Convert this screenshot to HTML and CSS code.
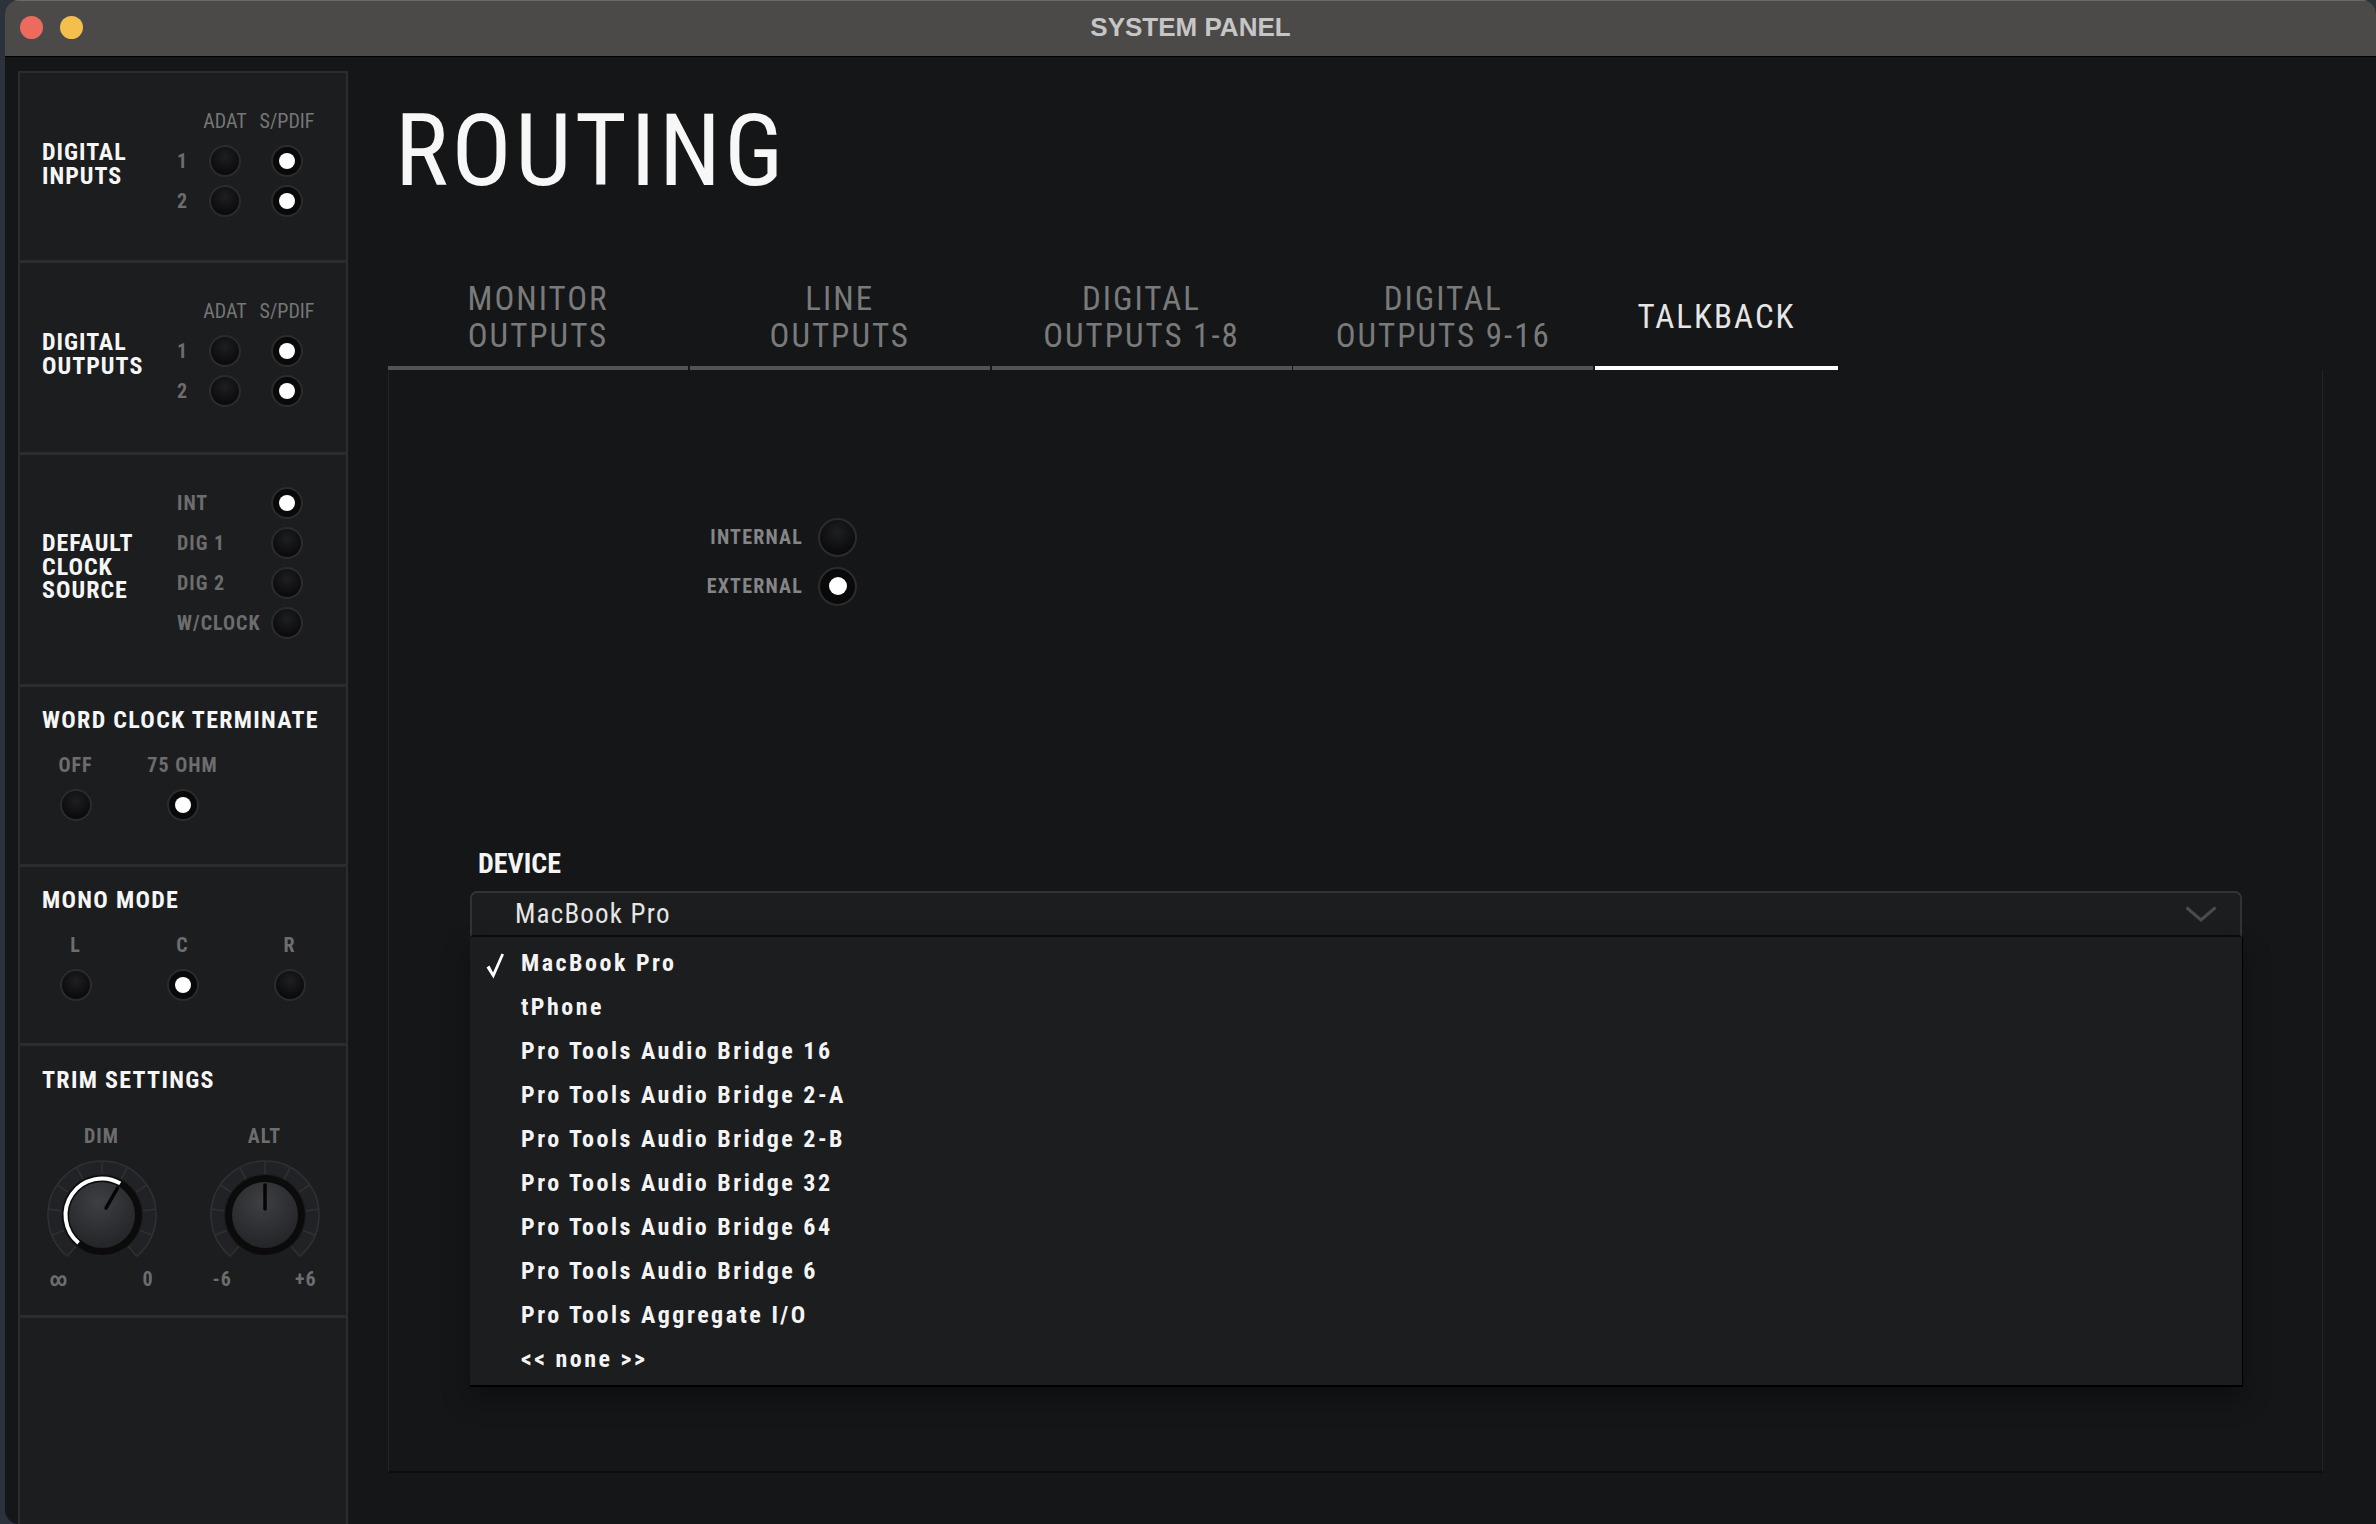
FILE: index.html
```html
<!DOCTYPE html>
<html lang="en">

<head>
    <meta charset="UTF-8">
    <meta name="viewport" content="width=device-width, initial-scale=1.0">
    <title>System Panel</title>
    <link rel="stylesheet" href="styles.css">
</head>

<body>
    <div class="window">

        <!-- title bar -->
        <div class="titlebar">
            <div class="lights">
                <span class="light light-red"></span>
                <span class="light light-yellow"></span>
            </div>
            <div class="window-title">SYSTEM PANEL</div>
            <div></div>
        </div>

        <div class="window-body">

            <!-- left settings column -->
            <aside class="sidebar">
                <section class="panel panel-digital panel-first">
                    <div class="panel-label">DIGITAL<br>INPUTS</div>
                    <div class="port-grid">
                        <span></span><span class="col-head">ADAT</span><span class="col-head">S/PDIF</span>
                        <span class="row-num">1</span><span class="radio"></span><span class="radio on"></span>
                        <span class="row-num">2</span><span class="radio"></span><span class="radio on"></span>
                    </div>
                </section>

                <section class="panel panel-digital">
                    <div class="panel-label">DIGITAL<br>OUTPUTS</div>
                    <div class="port-grid">
                        <span></span><span class="col-head">ADAT</span><span class="col-head">S/PDIF</span>
                        <span class="row-num">1</span><span class="radio"></span><span class="radio on"></span>
                        <span class="row-num">2</span><span class="radio"></span><span class="radio on"></span>
                    </div>
                </section>

                <section class="panel panel-clock">
                    <div class="panel-label">DEFAULT<br>CLOCK<br>SOURCE</div>
                    <div class="clock-grid">
                        <span class="opt-label">INT</span><span class="radio on"></span>
                        <span class="opt-label">DIG 1</span><span class="radio"></span>
                        <span class="opt-label">DIG 2</span><span class="radio"></span>
                        <span class="opt-label">W/CLOCK</span><span class="radio"></span>
                    </div>
                </section>

                <section class="panel panel-wordclock">
                    <div class="panel-title">WORD CLOCK TERMINATE</div>
                    <div class="opt-row">
                        <div class="opt"><span class="opt-head">OFF</span><span class="radio"></span></div>
                        <div class="opt"><span class="opt-head">75 OHM</span><span class="radio on"></span></div>
                    </div>
                </section>

                <section class="panel panel-mono">
                    <div class="panel-title">MONO MODE</div>
                    <div class="opt-row">
                        <div class="opt"><span class="opt-head">L</span><span class="radio"></span></div>
                        <div class="opt"><span class="opt-head">C</span><span class="radio on"></span></div>
                        <div class="opt"><span class="opt-head">R</span><span class="radio"></span></div>
                    </div>
                </section>

                <section class="panel panel-trim">
                    <div class="panel-title">TRIM SETTINGS</div>
                    <div class="knob-row">
                        <div class="knob-col">
                            <span class="opt-head">DIM</span>
                            <svg class="knob" width="112" height="112" viewBox="0 0 112 112">
                                <defs>
                                    <radialGradient id="face1" cx="45%" cy="30%" r="75%">
                                        <stop offset="0" stop-color="#3e3f43"/>
                                        <stop offset="1" stop-color="#222327"/>
                                    </radialGradient>
                                </defs>
                                <path d="M25.47 92.39 A47.5 47.5 0 1 1 86.53 92.39" fill="none" stroke="#212225" stroke-width="13"/>
                                <path d="M21.29 97.36 A54 54 0 1 1 90.71 97.36" fill="none" stroke="#303134" stroke-width="1.5"/>
                                <g stroke="#303134" stroke-width="1.5">
                                    <line x1="56" y1="2" x2="56" y2="15" transform="rotate(-140 56 56)"/>
                                    <line x1="56" y1="2" x2="56" y2="15" transform="rotate(-112 56 56)"/>
                                    <line x1="56" y1="2" x2="56" y2="15" transform="rotate(-84 56 56)"/>
                                    <line x1="56" y1="2" x2="56" y2="15" transform="rotate(-56 56 56)"/>
                                    <line x1="56" y1="2" x2="56" y2="15" transform="rotate(-28 56 56)"/>
                                    <line x1="56" y1="2" x2="56" y2="15"/>
                                    <line x1="56" y1="2" x2="56" y2="15" transform="rotate(28 56 56)"/>
                                    <line x1="56" y1="2" x2="56" y2="15" transform="rotate(56 56 56)"/>
                                    <line x1="56" y1="2" x2="56" y2="15" transform="rotate(84 56 56)"/>
                                    <line x1="56" y1="2" x2="56" y2="15" transform="rotate(112 56 56)"/>
                                    <line x1="56" y1="2" x2="56" y2="15" transform="rotate(140 56 56)"/>
                                </g>
                                <circle cx="56" cy="56" r="40" fill="#0b0b0c"/>
                                <circle cx="56" cy="56" r="33" fill="url(#face1)"/>
                                <path d="M32.54 83.96 A36.5 36.5 0 0 1 74.25 24.39" fill="none" stroke="#ffffff" stroke-width="4"/>
                                <line x1="60" y1="49.07" x2="71.5" y2="29.15" stroke="#050505" stroke-width="3.5" stroke-linecap="round"/>
                            </svg>
                            <div class="scale"><span>∞</span><span>0</span></div>
                        </div>
                        <div class="knob-col">
                            <span class="opt-head">ALT</span>
                            <svg class="knob" width="112" height="112" viewBox="0 0 112 112">
                                <defs>
                                    <radialGradient id="face2" cx="45%" cy="30%" r="75%">
                                        <stop offset="0" stop-color="#3e3f43"/>
                                        <stop offset="1" stop-color="#222327"/>
                                    </radialGradient>
                                </defs>
                                <path d="M25.47 92.39 A47.5 47.5 0 1 1 86.53 92.39" fill="none" stroke="#212225" stroke-width="13"/>
                                <path d="M21.29 97.36 A54 54 0 1 1 90.71 97.36" fill="none" stroke="#303134" stroke-width="1.5"/>
                                <g stroke="#303134" stroke-width="1.5">
                                    <line x1="56" y1="2" x2="56" y2="15" transform="rotate(-140 56 56)"/>
                                    <line x1="56" y1="2" x2="56" y2="15" transform="rotate(-112 56 56)"/>
                                    <line x1="56" y1="2" x2="56" y2="15" transform="rotate(-84 56 56)"/>
                                    <line x1="56" y1="2" x2="56" y2="15" transform="rotate(-56 56 56)"/>
                                    <line x1="56" y1="2" x2="56" y2="15" transform="rotate(-28 56 56)"/>
                                    <line x1="56" y1="2" x2="56" y2="15"/>
                                    <line x1="56" y1="2" x2="56" y2="15" transform="rotate(28 56 56)"/>
                                    <line x1="56" y1="2" x2="56" y2="15" transform="rotate(56 56 56)"/>
                                    <line x1="56" y1="2" x2="56" y2="15" transform="rotate(84 56 56)"/>
                                    <line x1="56" y1="2" x2="56" y2="15" transform="rotate(112 56 56)"/>
                                    <line x1="56" y1="2" x2="56" y2="15" transform="rotate(140 56 56)"/>
                                </g>
                                <circle cx="56" cy="56" r="40" fill="#0b0b0c"/>
                                <circle cx="56" cy="56" r="33" fill="url(#face2)"/>
                                <line x1="56" y1="50" x2="56" y2="26" stroke="#050505" stroke-width="3.5" stroke-linecap="round"/>
                            </svg>
                            <div class="scale"><span>-6</span><span>+6</span></div>
                        </div>
                    </div>
                </section>
            </aside>

            <!-- routing area -->
            <main class="main">
                <h1 class="page-title">ROUTING</h1>

                <nav class="tabs">
                    <div class="tab">MONITOR<br>OUTPUTS</div>
                    <div class="tab">LINE<br>OUTPUTS</div>
                    <div class="tab">DIGITAL<br>OUTPUTS 1-8</div>
                    <div class="tab">DIGITAL<br>OUTPUTS 9-16</div>
                    <div class="tab tab-active">TALKBACK</div>
                </nav>

                <div class="tab-body">
                    <div class="sync">
                        <span class="sync-label">INTERNAL</span><span class="radio big"></span>
                        <span class="sync-label">EXTERNAL</span><span class="radio big on"></span>
                    </div>

                    <div class="device">
                        <div class="device-label">DEVICE</div>
                        <div class="select">
                            <div class="select-box">
                                <span class="select-value">MacBook Pro</span>
                                <svg width="32" height="16" viewBox="0 0 32 16">
                                    <polyline points="1.5,1.5 16,14 30.5,1.5" fill="none" stroke="#4a4b4e" stroke-width="3"/>
                                </svg>
                            </div>
                            <!-- open dropdown -->
                            <ul class="select-menu">
                                <li class="select-item">
                                    <span class="check-cell">
                                        <svg width="18" height="26" viewBox="0 0 18 26">
                                            <path d="M0.5 14.5 L3.5 12.5 L7 19.5 L15.5 0.5 L18 1.5 L7.5 25.5 Z" fill="#ffffff"/>
                                        </svg>
                                    </span>MacBook Pro
                                </li>
                                <li class="select-item"><span class="check-cell"></span>tPhone</li>
                                <li class="select-item"><span class="check-cell"></span>Pro Tools Audio Bridge 16</li>
                                <li class="select-item"><span class="check-cell"></span>Pro Tools Audio Bridge 2-A</li>
                                <li class="select-item"><span class="check-cell"></span>Pro Tools Audio Bridge 2-B</li>
                                <li class="select-item"><span class="check-cell"></span>Pro Tools Audio Bridge 32</li>
                                <li class="select-item"><span class="check-cell"></span>Pro Tools Audio Bridge 64</li>
                                <li class="select-item"><span class="check-cell"></span>Pro Tools Audio Bridge 6</li>
                                <li class="select-item"><span class="check-cell"></span>Pro Tools Aggregate I/O</li>
                                <li class="select-item"><span class="check-cell"></span>&lt;&lt; none &gt;&gt;</li>
                            </ul>
                        </div>
                    </div>
                </div>
            </main>
        </div>
    </div>
</body>

</html>
```

FILE: styles.css
```css
/* base */
* {
    box-sizing: border-box;
}

html,
body {
    margin: 0;
    padding: 0;
    height: 100%;
}

body {
    background: #2c323b;
    font-family: "Liberation Sans Narrow", "Roboto Condensed", "Liberation Sans", Arial, sans-serif;
    color: #fff;
    overflow: hidden;
}

/* window frame */
.window {
    margin-left: 5px;
    height: 1524px;
    background: #151618;
    border-radius: 14px 14px 0 14px;
    overflow: hidden;
    display: flex;
    flex-direction: column;
}

.titlebar {
    flex: none;
    height: 57px;
    padding-bottom: 2px;
    background: #4c4a48;
    border-top: 1px solid #6c6a67;
    border-bottom: 1px solid #000;
    display: grid;
    grid-template-columns: 1fr auto 1fr;
    align-items: center;
}

.lights {
    display: flex;
    gap: 17px;
    padding-left: 14.5px;
}

.light {
    width: 23px;
    height: 23px;
    border-radius: 50%;
}

.light-red {
    background: #ec6a5e;
}

.light-yellow {
    background: #f4bf4f;
}

.window-title {
    font-family: "Liberation Sans", Arial, sans-serif;
    font-weight: 700;
    font-size: 26px;
    color: #c6c6c6;
}

.window-body {
    flex: 1;
    display: flex;
}

/* sidebar */
.sidebar {
    flex: none;
    width: 330px;
    margin: 14px 0 0 13px;
    background: #1c1d1f;
    border: 2px solid #2b2c2f;
    border-bottom: 0;
}

.panel {
    border-bottom: 3px solid #2b2c2f;
}

.panel-digital,
.panel-clock {
    display: flex;
    align-items: flex-start;
    padding-left: 22px;
}

.panel-digital {
    height: 192px;
}

.panel-first {
    height: 190px;
}

.panel-clock {
    height: 232px;
}

.panel-wordclock {
    height: 180px;
    padding-top: 21px;
}

.panel-mono {
    height: 179px;
    padding-top: 21px;
}

.panel-trim {
    height: 272px;
    padding-top: 21.5px;
}

.panel-label {
    width: 128px;
    flex: none;
    font-weight: 700;
    font-size: 24px;
    line-height: 23.5px;
    letter-spacing: 1px;
    color: #f6f6f6;
}

.panel-digital .panel-label {
    margin-top: 68px;
}

.panel-clock .panel-label {
    margin-top: 77px;
}

.port-grid {
    margin-top: 27.5px;
    display: grid;
    grid-template-columns: 24px 62px 62px;
    grid-auto-rows: 40px;
    align-items: center;
    justify-items: center;
}

.clock-grid {
    margin-top: 28px;
    display: grid;
    grid-template-columns: 86px 62px;
    grid-auto-rows: 40px;
    align-items: center;
    justify-items: center;
}

.col-head,
.row-num,
.opt-label,
.opt-head,
.scale {
    font-weight: 700;
    font-size: 20px;
    line-height: 24px;
    letter-spacing: 1px;
    color: #6d6d6e;
    white-space: nowrap;
}

.col-head {
    font-weight: 400;
    letter-spacing: 0;
    color: #767677;
}

.row-num,
.opt-label {
    justify-self: start;
    padding-left: 7px;
}

.panel-title {
    padding-left: 22px;
    font-weight: 700;
    font-size: 24px;
    line-height: 24px;
    letter-spacing: 1.3px;
    color: #f6f6f6;
    white-space: nowrap;
}

.opt-row {
    margin: 20.5px 0 0 2px;
    display: grid;
    grid-template-columns: repeat(3, 107px);
}

.opt {
    display: flex;
    flex-direction: column;
    align-items: center;
    gap: 12.5px;
}

.knob-row {
    display: grid;
    grid-template-columns: 163px 163px;
    margin-top: 32.5px;
}

.knob-col {
    display: flex;
    flex-direction: column;
    align-items: center;
}

.knob {
    margin-top: 11px;
    display: block;
}

.scale {
    width: 104px;
    margin-top: -2px;
    line-height: 20px;
    display: flex;
    justify-content: space-between;
}

/* radio buttons */
.radio {
    width: 32px;
    height: 32px;
    border-radius: 50%;
    border: 2px solid #2b2c2f;
    background: radial-gradient(circle at 50% 35%, #1e1f22 0%, #0b0b0c 72%);
    display: flex;
    align-items: center;
    justify-content: center;
}

.radio.on {
    background: #09090a;
}

.radio.on::after {
    content: "";
    width: 16px;
    height: 16px;
    border-radius: 50%;
    background: #fff;
}

.radio.big {
    width: 39px;
    height: 39px;
}

.radio.big.on::after {
    width: 18px;
    height: 18px;
}

/* main area */
.main {
    flex: 1;
    display: flex;
    flex-direction: column;
    padding: 0 53px 51px 40px;
}

.page-title {
    margin: 44px 0 0 7px;
    font-weight: 400;
    font-size: 100px;
    line-height: 100px;
    letter-spacing: 3.5px;
    color: #f7f7f7;
}

.tabs {
    margin-top: 78.5px;
    display: flex;
    gap: 1.75px;
}

.tab {
    width: 300px;
    height: 90.5px;
    padding-bottom: 12.5px;
    border-bottom: 4px solid #525356;
    display: flex;
    align-items: center;
    justify-content: center;
    text-align: center;
    font-size: 33px;
    line-height: 37px;
    letter-spacing: 2px;
    color: #7a7a7b;
}

.tab-active {
    width: 243px;
    border-bottom-color: #fff;
    color: #e6e6e6;
}

.tab-body {
    flex: 1;
    border: 1px solid #222326;
    border-top: 0;
    border-bottom: 2px solid #0c0d0e;
    padding-top: 142.5px;
}

/* internal / external */
.sync {
    margin-left: 304px;
    display: grid;
    grid-template-columns: 110px 39px;
    grid-auto-rows: 49px;
    column-gap: 15px;
    align-items: center;
    width: max-content;
}

.sync-label {
    text-align: right;
    font-weight: 700;
    font-size: 20px;
    letter-spacing: 1.2px;
    color: #858586;
}

/* device select */
.device {
    margin-top: 237px;
    padding: 0 80px 0 81px;
}

.device-label {
    padding-left: 8px;
    font-weight: 700;
    font-size: 28px;
    line-height: 32px;
    color: #f4f4f4;
}

.select {
    position: relative;
    margin-top: 11.5px;
}

.select-box {
    height: 46px;
    border: 2px solid #323336;
    border-bottom-color: #0c0c0d;
    border-radius: 7px 7px 0 0;
    background: #1c1d1f;
    display: flex;
    align-items: center;
    justify-content: space-between;
    padding: 0 23px 0 43px;
}

.select-value {
    font-size: 27px;
    line-height: 42px;
    letter-spacing: 1.2px;
    color: #e6e6e6;
}

.select-menu {
    position: absolute;
    top: 100%;
    left: 0;
    right: -1px;
    margin: 0;
    padding: 3.5px 0 4.5px;
    list-style: none;
    background: #1c1d1f;
    border-right: 1px solid #000;
    border-bottom: 2px solid #000;
    box-shadow: 0 12px 24px rgba(0, 0, 0, 0.35);
    z-index: 2;
}

.select-item {
    height: 44px;
    display: flex;
    align-items: center;
    font-weight: 700;
    font-size: 24px;
    letter-spacing: 2.5px;
    color: #f4f4f4;
    white-space: nowrap;
}

.check-cell {
    flex: none;
    width: 51px;
    display: flex;
}

.check-cell svg {
    margin: 7px 0 0 16px;
}
```
